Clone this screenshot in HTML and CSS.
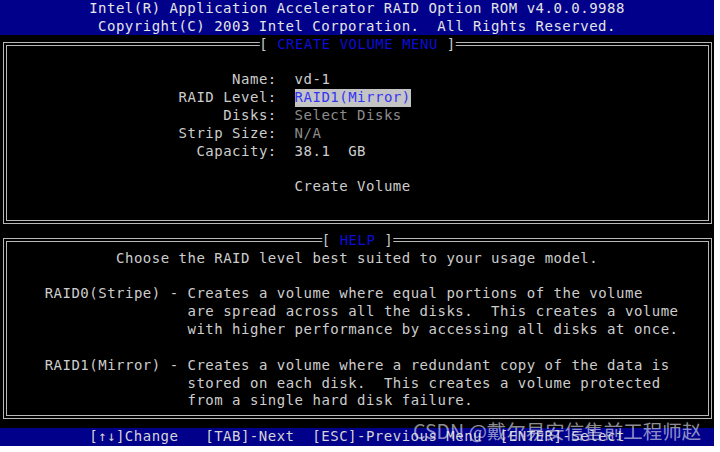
FILE: index.html
```html
<!DOCTYPE html>
<html lang="en">
<head>
  <meta charset="UTF-8">
  <title>Intel RAID Option ROM - Create Volume</title>
  <link rel="stylesheet" href="styles.css">
</head>
<body>
  <div class="screen">
    <header class="banner">
      <div class="row">Intel(R) Application Accelerator RAID Option ROM v4.0.0.9988</div>
      <div class="row">Copyright(C) 2003 Intel Corporation.  All Rights Reserved.</div>
    </header>

    <section class="panel panel-menu">
      <h2 class="panel-title">[ <span>CREATE VOLUME MENU</span> ]</h2>
      <div class="form">
        <span class="label">Name:</span><span class="value">vd-1</span>
        <span class="label">RAID Level:</span><span class="value"><span class="selected">RAID1(Mirror)</span></span>
        <span class="label">Disks:</span><span class="value dim">Select Disks</span>
        <span class="label">Strip Size:</span><span class="value dim">N/A</span>
        <span class="label">Capacity:</span><span class="value">38.1  GB</span>
        <span class="value action">Create Volume</span>
      </div>
    </section>

    <section class="panel panel-help">
      <h2 class="panel-title">[ <span>HELP</span> ]</h2>
      <p class="help-intro">Choose the RAID level best suited to your usage model.</p>
      <dl class="help-list">
        <dt>RAID0(Stripe) -</dt>
        <dd>Creates a volume where equal portions of the volume
are spread across all the disks.  This creates a volume
with higher performance by accessing all disks at once.</dd>
        <dt>RAID1(Mirror) -</dt>
        <dd>Creates a volume where a redundant copy of the data is
stored on each disk.  This creates a volume protected
from a single hard disk failure.</dd>
      </dl>
    </section>

    <footer class="keys">[↑↓]Change   [TAB]-Next  [ESC]-Previous Menu  [ENTER]-Select</footer>

    <div class="watermark">CSDN @戴尔易安信售前工程师赵</div>
  </div>
</body>
</html>
```

FILE: styles.css
```css
:root {
  --c: 8.928px;   /* one character cell */
  --r: 17.84px;   /* one text row */
  --line: #b8b8b8;
  --navy: #00008b;
}

body {
  margin: 0;
  background: #ffffff;
}

.screen {
  position: relative;
  width: 714px;
  height: 446px;
  background: #000000;
  color: #cdcdcd;
  font-family: "DejaVu Sans Mono", "Liberation Mono", monospace;
  font-size: 14px;
  letter-spacing: 0.5px;
  line-height: var(--r);
}

.banner {
  background: var(--navy);
  color: #e4e4e4;
  text-align: center;
  height: calc(var(--r) * 2 - 1px);
}

.row,
.value,
.help-intro,
.help-list dd,
.keys,
.panel-title {
  white-space: pre;
}

.panel {
  position: relative;
  box-sizing: border-box;
  width: 709px;
  margin-left: 3px;
  border: 4px double var(--line);
  padding-left: 1.93px;
}

.panel-menu {
  margin-top: 7.3px;
  padding-top: calc(var(--r) + 7.5px);
  padding-bottom: calc(var(--r) + 6.4px);
}

.panel-help {
  margin-top: 14px;
  padding-top: 7.3px;
  padding-bottom: 5.2px;
}

.panel-title {
  position: absolute;
  top: -10.4px;
  left: 50%;
  transform: translateX(-50%);
  margin: 0;
  background: #000000;
  color: #c8c8c8;
  font-size: inherit;
  font-weight: normal;
  line-height: var(--r);
}

.panel-title span {
  color: #0c0cd8;
}

/* create volume form */
.form {
  display: grid;
  grid-template-columns: calc(var(--c) * 30) auto;
  column-gap: calc(var(--c) * 2);
}

.label {
  text-align: right;
}

.value.dim {
  color: #8c8c8c;
}

.selected {
  display: inline-block;
  background: #c4c4c4;
  color: #3434f4;
}

.value.action {
  grid-column: 2;
  margin-top: var(--r);
}

/* help text */
.help-intro {
  margin: 0 0 var(--r) calc(var(--c) * 12);
}

.help-list {
  display: grid;
  grid-template-columns: calc(var(--c) * 16) auto;
  row-gap: var(--r);
  margin: 0 0 0 calc(var(--c) * 4);
}

.help-list dd {
  margin: 0;
}

.keys {
  margin-top: 8.7px;
  background: var(--navy);
  color: #d4d4d4;
  text-align: center;
  height: var(--r);
}

.watermark {
  position: absolute;
  left: 413px;
  top: 421px;
  font-family: "Noto Sans CJK SC", "Noto Sans", sans-serif;
  font-size: 19.5px;
  line-height: 20px;
  letter-spacing: 0;
  white-space: nowrap;
  color: rgba(235, 235, 245, 0.62);
}
```
